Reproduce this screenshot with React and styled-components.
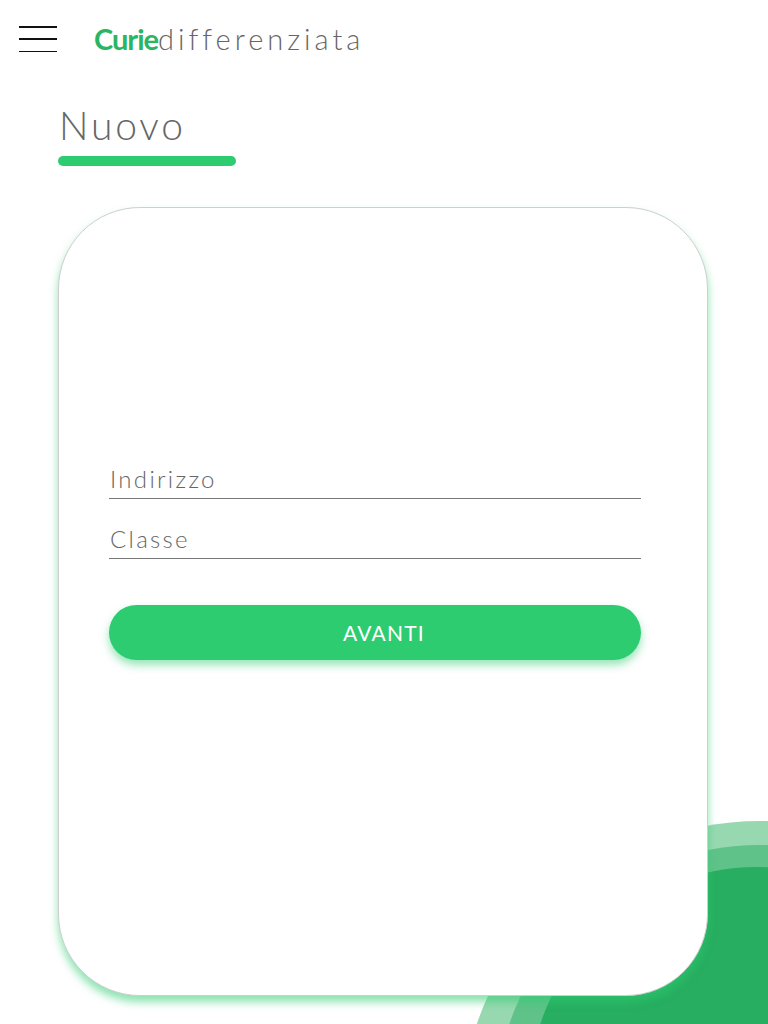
import styled, { createGlobalStyle } from 'styled-components';

const GlobalStyle = createGlobalStyle`
  html, body {
    margin: 0;
    padding: 0;
    background: #fff;
    font-family: 'Lato', 'Liberation Sans', sans-serif;
  }
  * { box-sizing: border-box; }
`;

export default function App() {
  return (
    <Page>
      <GlobalStyle />
      <Waves viewBox="0 0 768 1024" preserveAspectRatio="none" aria-hidden="true">
        <circle cx="760" cy="1120" r="299" fill="#98d8b0" />
        <circle cx="760" cy="1110" r="265" fill="#5fc288" />
        <circle cx="757" cy="1095" r="228" fill="#27ae60" />
      </Waves>
      <Header>
        <Burger aria-label="Menu">
          <span />
          <span />
          <span />
        </Burger>
        <Logo>
          <strong>Curie</strong>differenziata
        </Logo>
      </Header>
      <Main>
        <Title>Nuovo</Title>
        <TitleBar />
        <Card>
          <Form>
            <Field placeholder="Indirizzo" />
            <Field placeholder="Classe" />
            <Submit type="button">AVANTI</Submit>
          </Form>
        </Card>
      </Main>
    </Page>
  );
}

const Page = styled.div`
  position: relative;
  width: 768px;
  height: 1024px;
  overflow: hidden;
`;

const Waves = styled.svg`
  position: absolute;
  inset: 0;
  width: 768px;
  height: 1024px;
  z-index: 0;
`;

const Header = styled.header`
  position: relative;
  z-index: 1;
  height: 80px;
  display: flex;
  align-items: center;
  padding-left: 19px;
`;

const Burger = styled.button`
  width: 38px;
  height: 26px;
  padding: 0;
  border: 0;
  background: none;
  display: flex;
  flex-direction: column;
  justify-content: space-between;
  margin-top: -2px;
  span {
    display: block;
    height: 1.5px;
    background: #111;
  }
`;

const Logo = styled.div`
  margin-left: 37px;
  margin-top: -4px;
  font-size: 29px;
  font-weight: 300;
  color: #666;
  letter-spacing: 4px;
  strong {
    font-weight: 700;
    color: #2bb563;
    letter-spacing: -1px;
  }
`;

const Main = styled.main`
  position: relative;
  z-index: 1;
  padding: 0 60px 0 58px;
`;

const Title = styled.h1`
  margin: 20px 0 0 1px;
  font-size: 39px;
  font-weight: 300;
  letter-spacing: 2.8px;
  color: #666;
  line-height: 50px;
`;

const TitleBar = styled.div`
  width: 178px;
  height: 10px;
  margin-top: 6px;
  border-radius: 5px;
  background: #2ecc71;
`;

const Card = styled.section`
  margin-top: 41px;
  width: 650px;
  height: 789px;
  background: #fff;
  border: 1px solid #cfcfcf;
  border-radius: 82px;
  box-shadow: 0 6px 8px rgba(46, 204, 113, 0.55);
  padding: 253px 66px 0 50px;
`;

const Form = styled.form`
  display: flex;
  flex-direction: column;
`;

const Field = styled.input`
  height: 38px;
  border: 0;
  border-bottom: 1px solid #777;
  padding: 0 0 2px 1px;
  margin-bottom: 22px;
  font-family: 'Lato', 'Liberation Sans', sans-serif;
  font-size: 24px;
  font-weight: 300;
  letter-spacing: 2.3px;
  color: #666;
  background: transparent;
  outline: none;
  &::placeholder {
    color: #666;
  }
`;

const Submit = styled.button`
  margin-top: 24px;
  height: 55px;
  border: 0;
  border-radius: 28px;
  background: #2ecc71;
  color: #fff;
  font-family: 'Lato', 'Liberation Sans', sans-serif;
  font-size: 21px;
  font-weight: 400;
  letter-spacing: 1.2px;
  padding-left: 24px;
  box-shadow: 0 5px 8px rgba(46, 204, 113, 0.5);
  cursor: pointer;
`;
